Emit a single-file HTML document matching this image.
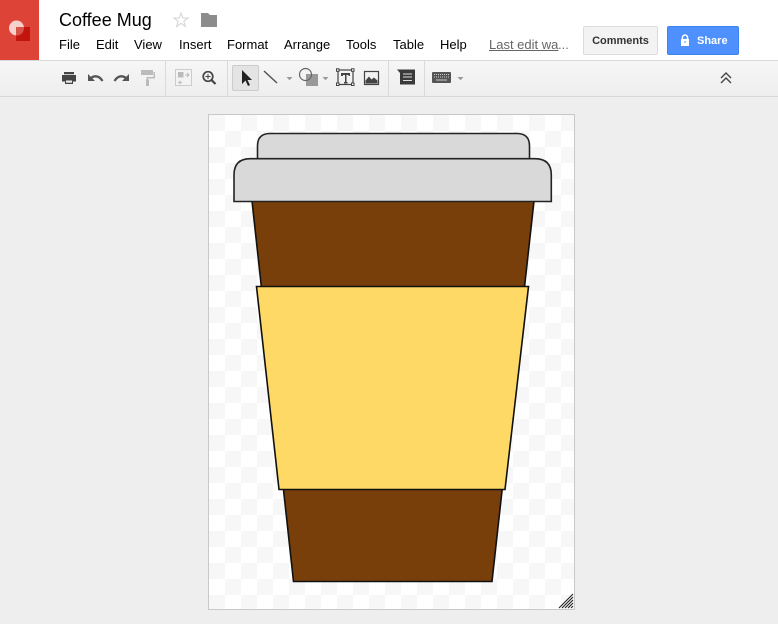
<!DOCTYPE html>
<html><head><meta charset="utf-8"><style>
html,body{margin:0;padding:0;width:778px;height:624px;overflow:hidden;background:#eee;font-family:"Liberation Sans",sans-serif}
.a{position:absolute}
#top{left:0;top:0;width:778px;height:60px;background:#fff}
#tb{left:0;top:60px;width:778px;background:linear-gradient(#f6f6f6,#eeeeee);border-top:1px solid #d9d9d9;border-bottom:1px solid #d9d9d9;box-sizing:content-box;height:35px}
.m{position:absolute;top:37px;font-size:13px;line-height:16px;color:#000;white-space:nowrap}
.sep{position:absolute;top:61px;width:1px;height:35px;background:#dadada}
</style></head><body>
<div class="a" id="top"></div>
<div class="a" style="left:0;top:0;width:39px;height:60px;background:#dd4437"></div>
<svg class="a" style="left:0;top:0" width="39" height="60"><circle cx="16.500" cy="28" r="7.500" fill="#f6d0cb"/><rect x="16" y="27" width="14" height="14" fill="#c2150e"/><path d="M16 27h8a7.500 7.500 0 0 1-7.500 8.500H16z" fill="#d85348"/></svg>
<div class="a" style="left:59px;top:10px;font-size:18px;line-height:21px;color:#000;white-space:nowrap">Coffee Mug</div>
<svg class="a" style="left:172px;top:11px" width="18" height="18"><path d="M9 2 10.800 7H16l-4.200 3.200 1.600 5.300L9 12.300l-4.400 3.200 1.600-5.300L2 7h5.200z" fill="#fff" stroke="#d3d3d3" stroke-width="1"/></svg>
<svg class="a" style="left:200px;top:12px" width="18" height="16"><path d="M1 1h7l2 2h7v12H1z" fill="#8c8c8c"/></svg>
<div class="m" style="left:59px">File</div>
<div class="m" style="left:96px">Edit</div>
<div class="m" style="left:134px">View</div>
<div class="m" style="left:179px">Insert</div>
<div class="m" style="left:227px">Format</div>
<div class="m" style="left:284px">Arrange</div>
<div class="m" style="left:346px">Tools</div>
<div class="m" style="left:393px">Table</div>
<div class="m" style="left:440px">Help</div>
<div class="m" style="left:489px;color:#666;text-decoration:underline;text-decoration-color:#666">Last edit wa</div>
<div class="m" style="left:558px;color:#777">...</div>
<div class="a" style="left:583px;top:26px;width:75px;height:29px;box-sizing:border-box;border:1px solid #dcdcdc;border-radius:2px;background:#f3f3f3;color:#333;font-size:11px;font-weight:bold;line-height:28px;text-align:center">Comments</div>
<div class="a" style="left:667px;top:26px;width:72px;height:29px;box-sizing:border-box;border:1px solid #3f83ee;border-radius:2px;background:#4d90fe;color:#fff;font-size:11px;font-weight:bold;line-height:28px;padding-left:29px">Share</div>
<svg class="a" style="left:679px;top:33px" width="12" height="14"><path d="M3.500 6V4.500a2.500 2.500 0 0 1 5 0V6" fill="none" stroke="#fff" stroke-width="1.500"/><rect x="2" y="6" width="8" height="7" fill="#fff"/><rect x="5.500" y="8" width="1" height="2" fill="#4d90fe"/></svg>
<div class="a" id="tb"></div>
<div class="sep" style="left:165px"></div><div class="sep" style="left:227px"></div><div class="sep" style="left:388px"></div><div class="sep" style="left:424px"></div>
<div class="a" style="left:232px;top:65px;width:27px;height:26px;box-sizing:border-box;border:1px solid #ccc;border-radius:2px;background:#e4e4e4"></div>
<svg class="a" style="left:0;top:60px" width="778" height="37">
<path d="M64 12h10v2.300H64zM62 15h14v6.500H62z" fill="#444"/><rect x="65" y="19" width="8" height="5" fill="#444"/><rect x="66" y="20.500" width="6" height="2.200" fill="#eee"/>
<path d="M90 19.500c3-4.500 9-4.500 12.500 1.500" fill="none" stroke="#555" stroke-width="2.300"/><path d="M88 14v7h7z" fill="#555"/>
<path d="M127 19.500c-3-4.500-9-4.500-12.500 1.500" fill="none" stroke="#555" stroke-width="2.300"/><path d="M129 14v7h-7z" fill="#555"/>
<path d="M141 10h12v5h-12z" fill="#bbb"/><path d="M153.500 12h1.500v6.500h-7v1.500h-1.500v-3h7z" fill="#bbb"/><rect x="146" y="19.500" width="3" height="6.500" fill="#bbb"/>
<rect x="175.500" y="9.500" width="16" height="16" fill="#f3f3f3" stroke="#ccc"/><rect x="178" y="12" width="5.500" height="5.500" fill="#bbb"/><path d="M185 15h3.500M187 13l2 2-2 2M178 22.500h4M180 20.500v4" stroke="#bbb" fill="none"/>
<circle cx="208" cy="16.500" r="4.800" fill="none" stroke="#444" stroke-width="1.700"/><path d="M211.500 20l4 4" stroke="#444" stroke-width="2.200"/><path d="M205.500 16.500h5M208 14v5" stroke="#444"/>
<path d="M242 10v14l3.500-3.500 2.500 5.500 2-1-2.500-5H252z" fill="#222"/>
<path d="M264 11l13 12" stroke="#555" stroke-width="1.500"/>
<path d="M286.500 17h6l-3 3.200z" fill="#999"/>
<rect x="306" y="14" width="12" height="12" fill="#999"/><circle cx="305.500" cy="14.500" r="6" fill="none" stroke="#666" stroke-width="1.200"/>
<path d="M322.500 17h6l-3 3.200z" fill="#999"/>
<rect x="338" y="10" width="15" height="14.500" fill="none" stroke="#444" stroke-width="1.200"/>
<path d="M341 13h9v3h-1.500v-1h-2v7h1v1.500h-3.500V22h1v-7h-2v1H341z" fill="#444"/>
<g fill="#fff" stroke="#444"><rect x="336.500" y="8.800" width="2.500" height="2.500"/><rect x="351.500" y="8.800" width="2.500" height="2.500"/><rect x="336.500" y="23" width="2.500" height="2.500"/><rect x="351.500" y="23" width="2.500" height="2.500"/></g>
<rect x="364.500" y="11.500" width="14" height="13" fill="none" stroke="#444" stroke-width="1.200"/><path d="M365.500 23.500v-3l3.500-4 2.500 3 2.500-2 3.500 3v3z" fill="#444"/>
<path d="M397 9.500l3 3.500v11.500h15V9.500z" fill="#3a3a3a"/><path d="M403 14h9M403 17h9M403 20.500h9" stroke="#ddd"/>
<rect x="432" y="12" width="19" height="11" rx="1" fill="#555"/><path d="M434 14.500h15M434 17h15" stroke="#ccc" stroke-dasharray="1 1"/><path d="M436 20h11" stroke="#ccc"/>
<path d="M457.500 17h6l-3 3.200z" fill="#999"/>
<path d="M721 18l5-5 5 5M721 23l5-5 5 5" fill="none" stroke="#444" stroke-width="1.400"/>
</svg>
<svg class="a" style="left:208px;top:114px" width="367" height="496">
<defs><pattern id="c" x="1" y="1" width="32" height="32" patternUnits="userSpaceOnUse"><rect width="32" height="32" fill="#fff"/><rect width="16" height="16" fill="#f7f7f7"/><rect x="16" y="16" width="16" height="16" fill="#f7f7f7"/></pattern></defs>
<rect x=".5" y=".5" width="366" height="495" fill="url(#c)" stroke="#c8c8c8"/>
<path d="M49.500 45.500V32q0-12.500 12.500-12.500H309q12.500 0 12.500 12.500V45.500z" fill="#d9d9d9" stroke="#222" stroke-width="1.600"/>
<path d="M44 87 L85.500 467.500H284L326 87z" fill="#783f0b" stroke="#111" stroke-width="1.600"/>
<path d="M26 87.500V61q0-16.300 16.300-16.300H327q16.300 0 16.300 16.300V87.500z" fill="#d9d9d9" stroke="#222" stroke-width="1.600"/>
<path d="M48.500 172.500H320.500L297 375.500H71z" fill="#ffd966" stroke="#111" stroke-width="1.600"/>
<path d="M351 494L365 480M354 494L365 483M357 494L365 486M360 494L365 489M363 494L365 492" stroke="#222" stroke-width="1.100"/>
</svg>
</body></html>
